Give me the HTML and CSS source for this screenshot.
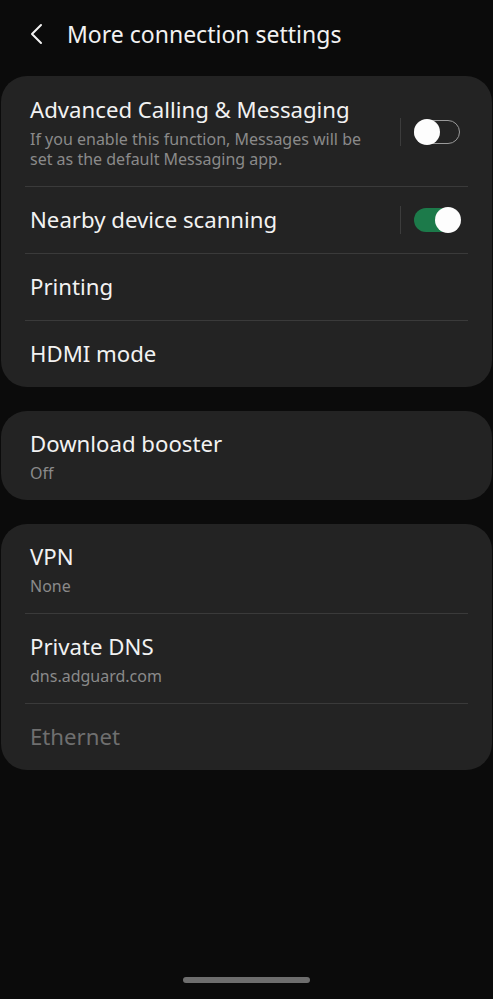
FILE: index.html
```html
<!DOCTYPE html>
<html>
<head>
<meta charset="utf-8">
<link rel="stylesheet" href="styles.css">
</head>
<body>
<div class="screen">
  <header class="topbar">
    <svg class="back" width="16" height="24" viewBox="0 0 16 24"><path d="M12 3 L3 12 L12 21" fill="none" stroke="#f2f2f2" stroke-width="2" stroke-linecap="round" stroke-linejoin="round"/></svg>
    <h1 class="title">More connection settings</h1>
  </header>

  <section class="card">
    <div class="row row-tall">
      <div class="text">
        <div class="label">Advanced Calling &amp; Messaging</div>
        <div class="sub">If you enable this function, Messages will be set as the default Messaging app.</div>
      </div>
      <div class="vsep"></div>
      <div class="switch off"><span class="knob"></span></div>
    </div>
    <div class="divider"></div>
    <div class="row">
      <div class="text"><div class="label">Nearby device scanning</div></div>
      <div class="vsep"></div>
      <div class="switch on"><span class="knob"></span></div>
    </div>
    <div class="divider"></div>
    <div class="row"><div class="text"><div class="label">Printing</div></div></div>
    <div class="divider"></div>
    <div class="row"><div class="text"><div class="label">HDMI mode</div></div></div>
  </section>

  <section class="card">
    <div class="row row-two">
      <div class="text">
        <div class="label">Download booster</div>
        <div class="sub">Off</div>
      </div>
    </div>
  </section>

  <section class="card">
    <div class="row row-two">
      <div class="text">
        <div class="label">VPN</div>
        <div class="sub">None</div>
      </div>
    </div>
    <div class="divider"></div>
    <div class="row row-two">
      <div class="text">
        <div class="label">Private DNS</div>
        <div class="sub">dns.adguard.com</div>
      </div>
    </div>
    <div class="divider"></div>
    <div class="row"><div class="text"><div class="label disabled">Ethernet</div></div></div>
  </section>

  <div class="spacer"></div>
  <div class="navbar"><div class="handle"></div></div>
</div>
</body>
</html>
```

FILE: styles.css
```css
html, body {
  margin: 0;
  padding: 0;
  background: #0b0b0b;
}
body {
  font-family: "Noto Sans", Roboto, sans-serif;
  color: #f2f2f2;
}
.screen {
  width: 493px;
  height: 999px;
  display: flex;
  flex-direction: column;
  overflow: hidden;
}
.topbar {
  height: 76px;
  flex: none;
  display: flex;
  align-items: center;
  padding-left: 29px;
  padding-bottom: 8px;
  box-sizing: border-box;
  gap: 22px;
}
.back { display: block; }
.title {
  margin: 0;
  font-size: 23px;
  line-height: 30px;
  font-weight: 400;
}
.card {
  background: #232323;
  border-radius: 26px;
  margin: 0 1px 24px 1px;
  display: flex;
  flex-direction: column;
}
.row {
  height: 66px;
  display: flex;
  align-items: center;
  padding: 0 32px 0 29px;
}
.row-tall { height: 110px; padding-top: 2px; box-sizing: border-box; }
.row-two { height: 89px; padding-top: 2px; box-sizing: border-box; }
.text { flex: 1; min-width: 0; }
.label {
  font-size: 22.2px;
  line-height: 28px;
}
.label.disabled { color: #6f6f6f; }
.sub {
  font-size: 16px;
  line-height: 20px;
  color: #8a8a8a;
  margin-top: 5px;
}
.row-tall .text { padding-right: 22px; }
.divider {
  height: 1px;
  background: #3a3a3a;
  margin: 0 24px 0 24px;
}
.vsep {
  width: 1px;
  height: 28px;
  background: #3c3c3c;
  margin: 0 13px 0 0;
}
.switch {
  width: 46px;
  height: 24px;
  border-radius: 12px;
  box-sizing: border-box;
  position: relative;
  flex: none;
}
.switch.off { border: 1.5px solid #9a9a9a; }
.switch.on { background: #1c7a4a; }
.knob {
  position: absolute;
  top: 50%;
  width: 26px;
  height: 26px;
  border-radius: 50%;
  background: #fdfdfd;
  transform: translateY(-50%);
}
.switch.off .knob { left: -1.5px; }
.switch.on .knob { right: -1px; }
.spacer { flex: 1; }
.navbar {
  height: 22px;
  display: flex;
  justify-content: center;
  align-items: flex-start;
}
.handle {
  width: 127px;
  height: 6px;
  border-radius: 3px;
  background: #6e6e6e;
}
```
